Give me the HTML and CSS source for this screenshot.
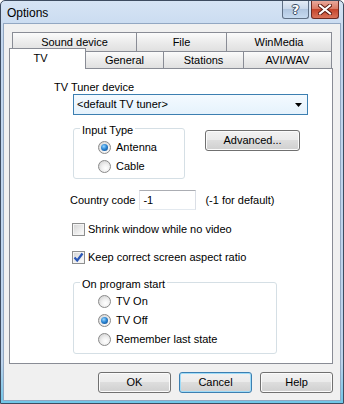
FILE: index.html
```html
<!DOCTYPE html>
<html>
<head>
<meta charset="utf-8">
<link rel="stylesheet" href="styles.css">
</head>
<body>
<div class="window">
  <div class="titlebar">
    <span class="title">Options</span>
    <div class="tbtns">
      <span class="tb tb-help">?</span>
      <span class="tb tb-close">
        <svg width="14" height="11" viewBox="0 0 14 11"><path d="M2 1.5 L12 9.5 M12 1.5 L2 9.5" stroke="#5a1a12" stroke-width="4" stroke-linecap="square"/><path d="M2 1.5 L12 9.5 M12 1.5 L2 9.5" stroke="#fff" stroke-width="2" stroke-linecap="square"/></svg>
      </span>
    </div>
  </div>
  <div class="client">
    <div class="tabs">
      <div class="row row1">
        <div class="tab w-sound">Sound device</div>
        <div class="tab w-file">File</div>
        <div class="tab w-wm">WinMedia</div>
      </div>
      <div class="row row2">
        <div class="tab tab-sel w-tv">TV</div>
        <div class="tab w-gen">General</div>
        <div class="tab w-st">Stations</div>
        <div class="tab w-avi">AVI/WAV</div>
      </div>
    </div>
    <div class="panel">
      <div class="lbl-device">TV Tuner device</div>
      <div class="combo">
        <span>&lt;default TV tuner&gt;</span>
        <svg width="7" height="4" viewBox="0 0 7 4"><path d="M0 0 H7 L3.5 4 Z" fill="#000"/></svg>
      </div>
      <div class="row-input">
        <div class="group g-input">
          <div class="legend">Input Type</div>
          <div class="opt first"><span class="radio on"></span>Antenna</div>
          <div class="opt"><span class="radio"></span>Cable</div>
        </div>
        <div class="btn btn-adv">Advanced...</div>
      </div>
      <div class="row-country">
        <span>Country code</span>
        <div class="field">-1</div>
        <span class="hint">(-1 for default)</span>
      </div>
      <div class="check c-shrink"><span class="box"></span>Shrink window while no video</div>
      <div class="check c-keep"><span class="box checked"><svg width="11" height="11" viewBox="0 0 11 11"><path d="M1.5 5.5 L4.2 8.5 L9.5 1.5" fill="none" stroke="#2a57b8" stroke-width="2.2"/></svg></span>Keep correct screen aspect ratio</div>
      <div class="group g-start">
        <div class="legend">On program start</div>
        <div class="opt first"><span class="radio"></span>TV On</div>
        <div class="opt"><span class="radio on"></span>TV Off</div>
        <div class="opt"><span class="radio"></span>Remember last state</div>
      </div>
    </div>
    <div class="buttons">
      <div class="btn">OK</div>
      <div class="btn btn-focus">Cancel</div>
      <div class="btn">Help</div>
    </div>
  </div>
</div>
</body>
</html>
```
FILE: styles.css
```css
html, body { margin: 0; padding: 0; }
body {
  font: 11px/13px "Liberation Sans", Arial, sans-serif;
  color: #000;
  background: #fff;
}
.window {
  width: 344px;
  height: 404px;
  box-sizing: border-box;
  border: 1px solid #3e4c60;
  border-radius: 5px 5px 0 0;
  background: linear-gradient(#d6e4f4, #c2d6ee 10%, #bcd3ec 90%, #6fc6e8);
  padding: 0 2px 2px 2px;
  display: flex;
  flex-direction: column;
}
.titlebar {
  height: 22px;
  display: flex;
  align-items: center;
  padding-left: 4px;
}
.title {
  font: 12px/14px "Liberation Sans", Arial, sans-serif;
  color: #000;
  margin-top: 1px;
}
.tbtns {
  margin-left: auto;
  align-self: flex-start;
  display: flex;
  gap: 2px;
  margin-right: 2px;
}
.tb {
  height: 18px;
  box-sizing: border-box;
  border: 1px solid #5f6f84;
  border-top: none;
  border-radius: 0 0 3px 3px;
  display: flex;
  align-items: center;
  justify-content: center;
}
.tb-help {
  width: 27px;
  background: linear-gradient(#e4ecf6, #c8d7ea 50%, #b1c6e0 50%, #c6daf0);
  color: #fff;
  font: bold 13px/13px "DejaVu Sans", sans-serif;
  text-shadow: 0 0 1px #3c4d66, 1px 0 0 #3c4d66, -1px 0 0 #3c4d66, 0 1px 0 #3c4d66, 0 -1px 0 #3c4d66;
}
.tb-close {
  width: 28px;
  border-color: #6b2a22;
  background: linear-gradient(#e9a99c, #d8755f 50%, #c5452c 50%, #d9735a);
}
.client {
  flex: 1;
  background: #f0f0f0;
  border: 1px solid #92a7c2;
  padding: 8px 0 0 5px;
  display: flex;
  flex-direction: column;
}
.tabs {
  width: 324px;
  margin-bottom: -1px;
}
.row { display: flex; }
.row1 { padding-left: 3px; height: 19px; }
.row2 { height: 18px; align-items: flex-start; }
.tab {
  box-sizing: border-box;
  border: 1px solid #898c95;
  border-bottom: none;
  background: linear-gradient(#fbfbfb, #ececec 50%, #e0e0e0);
  text-align: center;
  margin-left: -1px;
}
.tab:first-child { margin-left: 0; }
.row1 .tab { height: 19px; line-height: 18px; }
.row2 .tab { height: 17px; line-height: 17px; }
.row2 .tab-sel {
  height: 21px;
  margin-top: -3px;
  background: #fff;
  line-height: 19px;
  padding-right: 14px;
  position: relative;
  z-index: 1;
}
.w-sound { width: 125px; }
.w-file { width: 91px; }
.w-wm { width: 106px; }
.w-tv { width: 77px; }
.w-gen { width: 79px; }
.w-st { width: 81px; }
.w-avi { width: 89px; }
.panel {
  width: 324px;
  height: 296px;
  box-sizing: border-box;
  border: 1px solid #898c95;
  background: #fff;
  padding: 12px 0 0 44px;
}
.lbl-device { height: 13px; }
.combo {
  margin-left: 19px;
  width: 235px;
  height: 21px;
  box-sizing: border-box;
  border: 1px solid #3c7fb1;
  background: linear-gradient(#f4faff, #e5f2fc);
  display: flex;
  align-items: center;
  justify-content: space-between;
  padding: 0 5px 0 3px;
}
.row-input {
  display: flex;
  align-items: flex-start;
  margin: 13px 0 0 19px;
}
.group {
  box-sizing: border-box;
  border: 1px solid #d5dfe5;
  border-radius: 3px;
  padding-left: 24px;
}
.legend {
  width: fit-content;
  background: #fff;
  margin: -5px 0 0 -18px;
  padding: 0 2px;
  height: 13px;
}
.g-input { width: 112px; height: 51px; }
.opt {
  display: flex;
  align-items: center;
  height: 13px;
  margin-top: 6px;
}
.opt.first { margin-top: 4px; }
.radio {
  width: 13px;
  height: 13px;
  box-sizing: border-box;
  border-radius: 50%;
  border: 1px solid #8a8a8a;
  background: radial-gradient(circle at 60% 65%, #ffffff, #f0f0f0 40%, #c9c9c9);
  margin-right: 5px;
  display: flex;
  align-items: center;
  justify-content: center;
}
.radio.on::after {
  content: "";
  width: 7px;
  height: 7px;
  border-radius: 50%;
  background: radial-gradient(circle at 40% 35%, #9ad8ff, #2c86d4 45%, #0c3f7e);
}
.btn {
  width: 73px;
  height: 21px;
  box-sizing: border-box;
  border: 1px solid #707070;
  border-radius: 3px;
  background: linear-gradient(#f2f2f2, #ebebeb 45%, #dddddd 50%, #cfcfcf);
  box-shadow: inset 0 0 0 1px #fbfbfb;
  display: flex;
  align-items: center;
  justify-content: center;
}
.btn-adv {
  width: 95px;
  margin: 2px 0 0 20px;
}
.row-country {
  display: flex;
  align-items: center;
  margin: 11px 0 0 16px;
}
.field {
  width: 57px;
  height: 20px;
  box-sizing: border-box;
  border: 1px solid #abadb3;
  border-top-color: #abadb3;
  border-left-color: #e2e3ea;
  border-right-color: #dbdfe6;
  border-bottom-color: #e3e9ef;
  margin: 0 9px 0 4px;
  padding-left: 3px;
  display: flex;
  align-items: center;
  background: #fff;
}
.check {
  display: flex;
  align-items: center;
  height: 13px;
  margin-left: 18px;
}
.c-shrink { margin-top: 13px; }
.c-keep { margin-top: 15px; }
.box {
  width: 13px;
  height: 13px;
  box-sizing: border-box;
  border: 1px solid #8e8f8f;
  background: linear-gradient(135deg, #d3d3d3, #f2f2f2 70%, #fff);
  box-shadow: inset 0 0 0 1px #f4f4f4;
  margin-right: 3px;
  display: flex;
  align-items: center;
  justify-content: center;
}
.g-start {
  width: 204px;
  height: 72px;
  margin: 18px 0 0 19px;
}
.buttons {
  width: 324px;
  display: flex;
  justify-content: flex-end;
  gap: 8px;
  margin-top: 8px;
}
.btn-focus {
  border-color: #3c7fb1;
  box-shadow: inset 0 0 0 1px #9fdcf8;
}
```
